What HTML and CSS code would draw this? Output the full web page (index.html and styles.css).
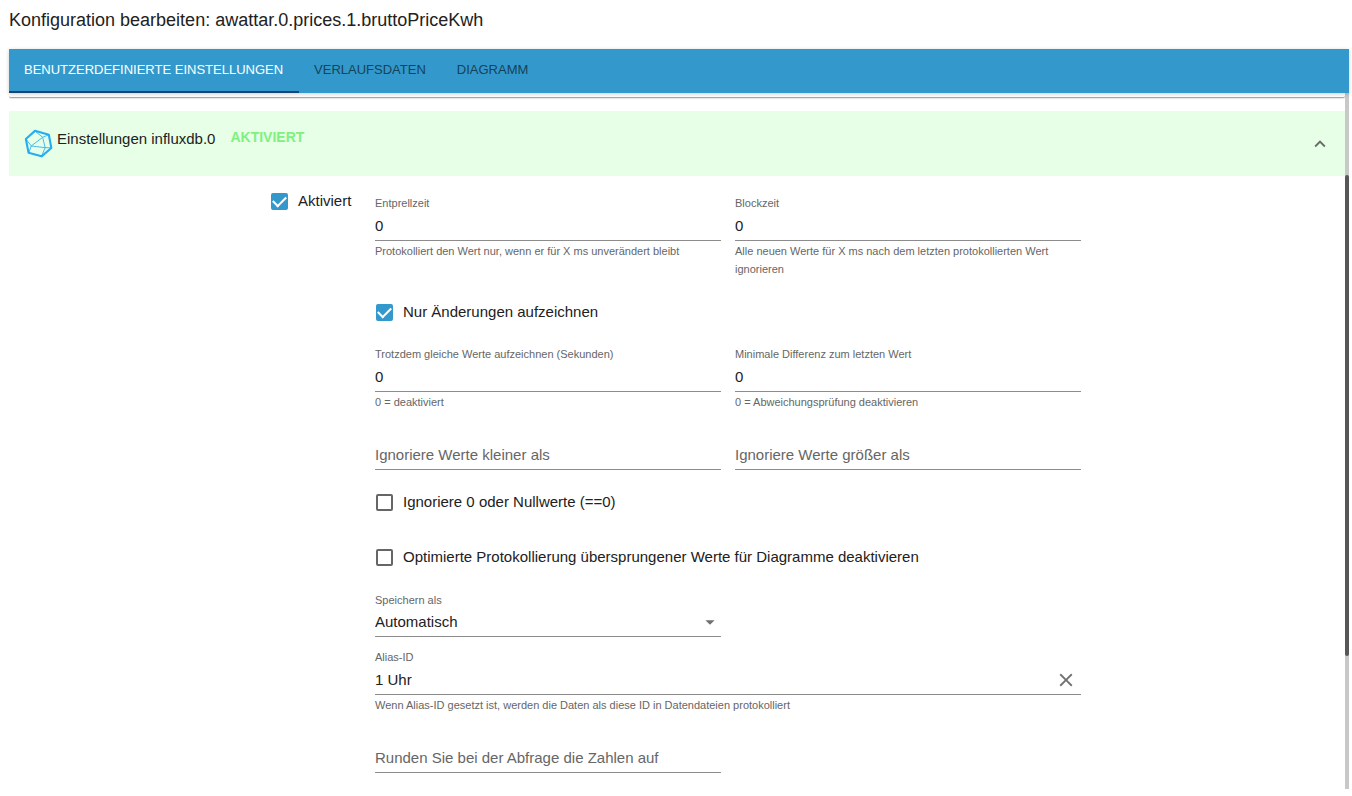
FILE: index.html
```html
<!DOCTYPE html>
<html lang="de">
<head>
<meta charset="utf-8">
<title>Konfiguration bearbeiten</title>
<link rel="stylesheet" href="styles.css">
</head>
<body>
<div class="dialog">
  <h1 class="title">Konfiguration bearbeiten: awattar.0.prices.1.bruttoPriceKwh</h1>
  <div class="tabs" role="tablist">
    <button class="tab tab-active" role="tab" aria-selected="true">BENUTZERDEFINIERTE EINSTELLUNGEN</button>
    <button class="tab" role="tab" aria-selected="false">VERLAUFSDATEN</button>
    <button class="tab" role="tab" aria-selected="false">DIAGRAMM</button>
  </div>
  <div class="panel">
    <main class="content">
      <div class="previous-section"></div>
      <button class="section-header" aria-expanded="true">
        <svg class="logo" viewBox="0 0 28 28" fill="none" stroke="#22adf6" stroke-linejoin="round">
          <path stroke-width="2" d="M10.6 1.8 24 5.6 26.4 18.4 17 26.4 4.4 23 1.8 9.6Z"/>
          <path stroke-width="0.8" d="M10.6 2 18 8 24 5.6M18 8 20.4 18 26.2 18.2M20.4 18 17 26.2M20.4 18 7 16.4 18 8M7 16.4 1.8 9.6M7 16.4 4.6 23"/>
        </svg>
        <span class="section-name">Einstellungen influxdb.0</span>
        <span class="section-state">AKTIVIERT</span>
        <svg class="chevron" viewBox="0 0 24 24"><path fill="#666d66" d="M12 8l-6 6 1.41 1.41L12 10.83l4.59 4.58L18 14z"/></svg>
      </button>
      <form class="settings">
        <label class="check"><input type="checkbox" checked>Aktiviert</label>
        <div class="fields">
          <div class="row">
            <div class="field">
              <label for="debounce">Entprellzeit</label>
              <input id="debounce" type="text" value="0">
              <p class="hint">Protokolliert den Wert nur, wenn er für X ms unverändert bleibt</p>
            </div>
            <div class="field">
              <label for="block">Blockzeit</label>
              <input id="block" type="text" value="0">
              <p class="hint">Alle neuen Werte für X ms nach dem letzten protokollierten Wert ignorieren</p>
            </div>
          </div>
          <label class="check changes"><input type="checkbox" checked>Nur Änderungen aufzeichnen</label>
          <div class="row">
            <div class="field">
              <label for="relog">Trotzdem gleiche Werte aufzeichnen (Sekunden)</label>
              <input id="relog" type="text" value="0">
              <p class="hint">0 = deaktiviert</p>
            </div>
            <div class="field">
              <label for="delta">Minimale Differenz zum letzten Wert</label>
              <input id="delta" type="text" value="0">
              <p class="hint">0 = Abweichungsprüfung deaktivieren</p>
            </div>
          </div>
          <div class="row limits">
            <div class="field"><input type="text" aria-label="Ignoriere Werte kleiner als" placeholder="Ignoriere Werte kleiner als"></div>
            <div class="field"><input type="text" aria-label="Ignoriere Werte größer als" placeholder="Ignoriere Werte größer als"></div>
          </div>
          <label class="check ignore-zero"><input type="checkbox">Ignoriere 0 oder Nullwerte (==0)</label>
          <label class="check optimized"><input type="checkbox">Optimierte Protokollierung übersprungener Werte für Diagramme deaktivieren</label>
          <div class="row storage">
            <div class="field">
              <label for="type">Speichern als</label>
              <div class="select-box">
                <select id="type"><option>Automatisch</option></select>
                <svg class="arrow" viewBox="0 0 24 24"><path fill="#707070" d="M7 10l5 5 5-5z"/></svg>
              </div>
            </div>
          </div>
          <div class="field alias">
            <label for="alias">Alias-ID</label>
            <div class="input-box">
              <input id="alias" type="text" value="1 Uhr">
              <button class="clear" type="button" aria-label="Löschen"><svg viewBox="0 0 24 24"><path fill="#707070" d="M19 6.41 17.59 5 12 10.59 6.41 5 5 6.41 10.59 12 5 17.59 6.41 19 12 13.41 17.59 19 19 17.59 13.41 12z"/></svg></button>
            </div>
            <p class="hint">Wenn Alias-ID gesetzt ist, werden die Daten als diese ID in Datendateien protokolliert</p>
          </div>
          <div class="row rounding">
            <div class="field"><input type="text" aria-label="Runden Sie bei der Abfrage die Zahlen auf" placeholder="Runden Sie bei der Abfrage die Zahlen auf"></div>
          </div>
        </div>
      </form>
    </main>
    <div class="scroll-track"><div class="scroll-thumb"></div></div>
  </div>
</div>
</body>
</html>
```
FILE: styles.css
```css
* {
  box-sizing: border-box;
}

body {
  margin: 0;
  background: #fff;
  color: #212121;
  font: 15px/18px "Liberation Sans", Arial, sans-serif;
}

button,
input,
select {
  margin: 0;
  padding: 0;
  border: 0;
  background: none;
  color: inherit;
  font: inherit;
}

button {
  cursor: pointer;
}

.dialog {
  display: flex;
  flex-direction: column;
  min-height: 100vh;
  padding: 0 3px 7px 9px;
}

.title {
  margin: 0;
  padding: 8px 0 17px;
  font-size: 18px;
  font-weight: 400;
  line-height: 24px;
}

.tabs {
  position: relative;
  z-index: 1;
  display: flex;
  background: #3399cc;
  box-shadow: 0 1px 4px rgba(0, 0, 0, 0.2);
}

.tab {
  padding: 12px 16px 12px 15px;
  border-bottom: 2px solid transparent;
  color: #164258;
  font-size: 13px;
}

.tab-active {
  border-bottom-color: #164477;
  color: #fff;
}

.panel {
  display: flex;
  flex: 1;
}

.content {
  flex: 1;
}

.previous-section {
  height: 5px;
  margin-bottom: 13px;
  border-bottom: 1px solid #a8a8a8;
  border-radius: 0 0 2px 2px;
  box-shadow: 0 1px 1px rgba(0, 0, 0, 0.1);
}

.section-header {
  display: flex;
  align-items: flex-start;
  width: 100%;
  padding: 18px 14px 18px 15px;
  background: #e6ffe6;
  text-align: left;
}

.logo {
  width: 29px;
  height: 29px;
}

.section-name {
  padding: 1px 15px 0 4px;
}

.section-state {
  color: #80f080;
  font-weight: 700;
  font-size: 14px;
  line-height: 16px;
}

.chevron {
  width: 22px;
  height: 22px;
  margin: 4px 0 0 auto;
}

.settings {
  display: grid;
  grid-template-columns: 105px 1fr;
  align-items: start;
  max-width: 814px;
  margin: 0 auto;
  padding: 17px 3px 0 0;
}

.fields {
  padding-top: 3px;
}

.row {
  display: grid;
  grid-template-columns: 1fr 1fr;
  gap: 14px;
}

.check {
  display: flex;
  align-items: flex-start;
  gap: 10px;
  height: 17px;
  padding-left: 1px;
  line-height: 15px;
}

.check input {
  display: grid;
  place-items: center;
  flex: none;
  width: 17px;
  height: 17px;
  border: 2px solid #666;
  border-radius: 2px;
  appearance: none;
}

.check input:checked {
  border-color: #3399cc;
  background: #3399cc;
}

.check input:checked::after {
  content: "";
  width: 11px;
  height: 6px;
  margin-bottom: 3px;
  border: solid #fff;
  border-width: 0 0 2px 2px;
  transform: rotate(-45deg);
}

.field label {
  display: block;
  color: #666;
  font-size: 11px;
  line-height: 14px;
}

.field input {
  display: block;
  width: 100%;
  height: 31px;
  border-bottom: 1px solid #8c8c8c;
  border-radius: 0;
  outline: 0;
}

.field input::placeholder {
  color: #666;
  opacity: 1;
}

.hint {
  margin: 1px 0 0;
  color: #666;
  font-size: 11px;
  line-height: 18px;
}

.changes {
  margin: 26px 0;
}

.limits {
  margin-top: 28px;
}

.ignore-zero {
  margin-top: 24px;
}

.optimized {
  margin-top: 38px;
}

.storage {
  margin-top: 27px;
}

.select-box,
.input-box {
  display: grid;
  align-items: center;
}

.select-box > *,
.input-box > * {
  grid-area: 1 / 1;
}

.select-box select {
  width: 100%;
  height: 30px;
  border-bottom: 1px solid #8c8c8c;
  border-radius: 0;
  appearance: none;
}

.arrow {
  justify-self: end;
  width: 22px;
  height: 22px;
  pointer-events: none;
}

.alias {
  margin-top: 13px;
}

.clear {
  justify-self: end;
  width: 22px;
  height: 22px;
  margin-right: 4px;
}

.clear svg {
  display: block;
}

.rounding {
  margin-top: 28px;
}

.scroll-track {
  width: 4px;
  background: #c8c8c8;
  display: grid;
  grid-template-rows: 82fr 481fr 133fr;
}

.scroll-thumb {
  grid-row: 2;
  border-radius: 2px;
  background: #575757;
}
```
